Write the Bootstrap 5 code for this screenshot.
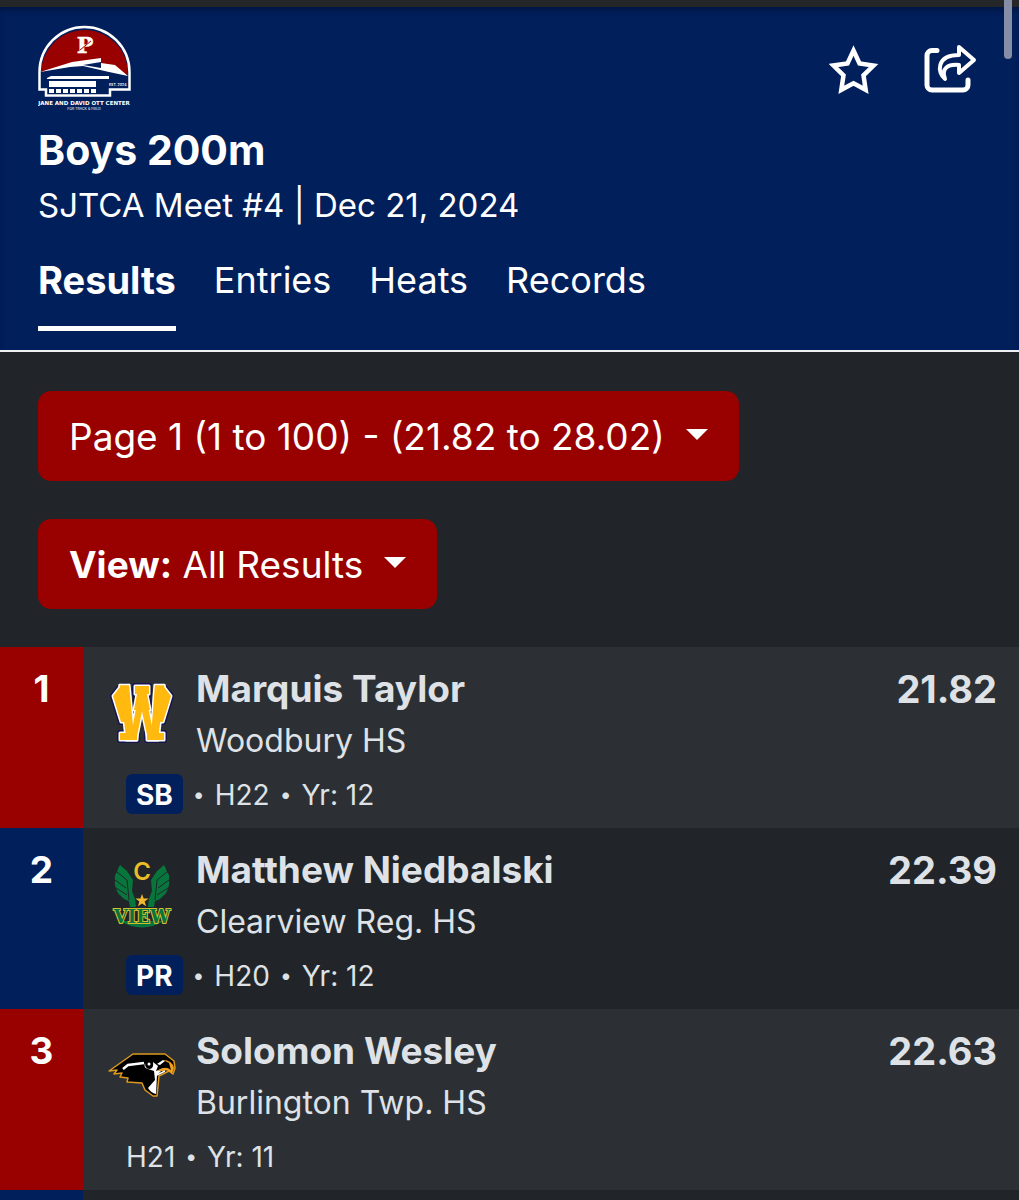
<!DOCTYPE html>
<html lang="en" data-bs-theme="dark">
<head>
<meta charset="utf-8">
<meta name="viewport" content="width=device-width, initial-scale=1">
<title>Boys 200m - SJTCA Meet #4</title>
<link href="https://cdn.jsdelivr.net/npm/bootstrap@5.3.0/dist/css/bootstrap.min.css" rel="stylesheet">
<style>
:root { --navy: #001f5b; --red: #990000; }
body { font-family: Inter, "Liberation Sans", sans-serif; background: #212529; color: #dee2e6; overflow-x: hidden; }
.top-strip { height: 7px; background: #252628; }
.meet-header { background: var(--navy); color: #fff; border-bottom: 2px solid #eef0f5; padding: 18px 38px 19px; box-shadow: inset 0 5px 6px -3px #00133c; }
.venue-logo { width: 94px; height: 87px; }
.icon-btn { background: none; border: 0; padding: 0; color: #fff; line-height: 0; }
.icon-row { gap: 45px; }
.event-title { font-size: 41px; line-height: 48px; font-weight: 700; margin: 14px 0 0; }
.event-sub { font-size: 33px; line-height: 40px; margin: 11px 0 0; }
.event-tabs { gap: 38px; margin-top: 33px; }
.event-tabs a { font-size: 36px; line-height: 44px; color: #fff; text-decoration: none; padding-bottom: 24px; border-bottom: 5px solid transparent; }
.event-tabs a.active { font-size: 38px; font-weight: 700; border-color: #fff; }
.filters { padding: 39px 38px 38px; gap: 38px; }
.filter-btn { --bs-btn-bg: var(--red); --bs-btn-hover-bg: #850000; --bs-btn-active-bg: #850000; --bs-btn-color: #fff; --bs-btn-hover-color: #fff; --bs-btn-border-width: 0; --bs-btn-border-radius: 13px; --bs-btn-font-size: 37px; --bs-btn-line-height: 46px; --bs-btn-padding-x: 31px; padding-top: 23px; padding-bottom: 21px; white-space: nowrap; }
.filter-btn::after { margin-left: 21px; border-top-width: 11px; border-left-width: 11px; border-right-width: 11px; vertical-align: 10px; }
.results td { padding: 20px 22px 0; border: 0; vertical-align: top; height: 181px; background: #212529; color: #dee2e6; box-shadow: none; }
.results tr:nth-child(odd) td { background: #2c3034; }
.results .rank { width: 83px; padding: 20px 0 0; text-align: center; background: var(--navy); color: #fff; }
.results tr:nth-child(odd) .rank { background: var(--red); }
.results .athlete { padding-left: 25px; padding-right: 0; }
.results .next-row td { height: 10px; padding: 0; }
.strong-line { font-size: 37px; line-height: 44px; font-weight: 700; }
.finish-time { font-size: 38px; line-height: 44px; font-weight: 700; text-align: right; }
.team-row { gap: 20px; }
.school { font-size: 32px; line-height: 40px; margin-top: 10px; }
.team-logo { width: 68px; height: 70px; margin-top: 11px; overflow: visible; }
.meta-line { font-size: 28px; margin-top: 13px; padding-left: 18px; gap: 10px; }
.meta-line span { line-height: 38px; padding-top: 2px; }
.meta-line .sep-dot { font-size: 21px; }
.meta-line .mark-tag { background: var(--navy); color: #fff; font-weight: 700; padding: 2px 10px 0; border-radius: 6px; }
.scroll-thumb { position: absolute; top: 0; right: 7px; width: 8px; height: 59px; border-radius: 0 0 4px 4px; background: #868da6; }
</style>
</head>
<body>
<div class="top-strip"></div>
<div class="scroll-thumb"></div>
<header class="meet-header">
  <div class="d-flex justify-content-between align-items-start">
    <svg class="venue-logo" viewBox="0 0 94 87" role="img" aria-label="Jane and David Ott Center">
      <path d="M3 47a43.500 43.500 0 0 1 87 3L64 40 34 38z" fill="#990000"/>
      <path d="M2 47L34 37 63 33v5l14 2 13 11-19-4-26-6-13 1z" fill="#fff"/>
      <path d="M45 40l18-3v6z" fill="#001f5b"/>
      <path d="M9 53l4-2h58v3H9zM11 56h47v6H11z" fill="#fff"/>
      <path d="M11 66h47" stroke="#fff" stroke-width="4" stroke-dasharray="5 2"/>
      <path d="M1.500 64.500V47a45 45 0 0 1 90 0v17.500H72v6H8v-6z" fill="none" stroke="#fff" stroke-width="2.500"/>
      <text x="47" y="28" text-anchor="middle" font-family="DejaVu Serif" font-weight="700" font-size="22" fill="#fff" stroke="#fff" stroke-width=".5">P</text>
      <path d="M42 25l11-9" stroke="#990000"/>
      <text x="71" y="61" font-size="3.500" fill="#fff" font-weight="600">EST. 2024</text>
      <text x="46" y="80" text-anchor="middle" font-family="DejaVu Sans" font-size="5.500" font-weight="700" fill="#fff">JANE AND DAVID OTT CENTER</text>
      <text x="46" y="85" text-anchor="middle" font-size="3.500" fill="#fff">FOR TRACK &amp; FIELD</text>
    </svg>
    <div class="d-flex icon-row">
      <button class="icon-btn" type="button" aria-label="Favorite"><svg width="50" height="87" viewBox="0 0 50 87"><path d="M24.500 25.500l6 13 14 2-10 9.800 2.200 14.500-12.200-6.500-12.200 6.500 2.200-14.500-10-9.800 14-2z" fill="none" stroke="#fff" stroke-width="4.500"/></svg></button>
      <button class="icon-btn" type="button" aria-label="Share"><svg width="57" height="87" viewBox="0 0 57 87" fill="none" stroke="#fff" stroke-width="5" stroke-linecap="round" stroke-linejoin="round"><path d="M13 25.500H8a5 5 0 0 0-5 5V60a5 5 0 0 0 5 5h31a5 5 0 0 0 5-5v-5"/><path d="M35 22l15 13-15 13v-8c-11-1-18 3-14 14-8-6-9-24 14-24z" stroke-width="4"/></svg></button>
    </div>
  </div>
  <h1 class="event-title">Boys 200m</h1>
  <p class="event-sub">SJTCA Meet #4 | Dec 21, 2024</p>
  <nav class="event-tabs d-flex">
    <a class="active" href="#results" aria-current="page">Results</a>
    <a href="#entries">Entries</a>
    <a href="#heats">Heats</a>
    <a href="#records">Records</a>
  </nav>
</header>
<main>
  <div class="filters d-flex flex-column align-items-start">
    <button class="btn filter-btn dropdown-toggle" type="button">Page 1 (1 to 100) - (21.82 to 28.02)</button>
    <button class="btn filter-btn dropdown-toggle" type="button"><b>View:</b> All Results</button>
  </div>
  <table class="table results mb-0" id="results">
    <tbody>
      <tr>
        <td class="rank strong-line">1</td>
        <td class="athlete">
          <div class="d-flex align-items-start team-row">
            <svg class="team-logo flex-shrink-0" viewBox="0 0 68 70" role="img" aria-label="Woodbury">
              <defs>
                <path id="slabs" d="M5 18l7-9 6-1v10h-3l6 26h-8zM63 18l-7-9-6-1v10h3l-6 26h8zM27 8h14v8h-2l3 16H26l3-16h-2zM12 55h17v7H12zM39 55h17v7H39z"/>
              </defs>
              <g stroke-linejoin="round" fill="#ffb90f" font-family="DejaVu Sans Mono" font-weight="700" font-size="74" text-anchor="middle">
                <g stroke="#15144f" stroke-width="6"><use href="#slabs"/></g>
                <g stroke="#fff" stroke-width="3"><use href="#slabs"/><text x="34" y="62">W</text></g>
                <use href="#slabs"/>
              </g>
              <text x="34" y="62" fill="#ffb90f" font-family="DejaVu Sans Mono" font-weight="700" font-size="74" text-anchor="middle">W</text>
            </svg>
            <div><div class="strong-line">Marquis Taylor</div><div class="school">Woodbury HS</div></div>
          </div>
          <div class="meta-line d-flex"><span class="mark-tag">SB</span><span class="sep-dot">•</span><span>H22</span><span class="sep-dot">•</span><span>Yr: 12</span></div>
        </td>
        <td class="finish-time">21.82</td>
      </tr>
      <tr>
        <td class="rank strong-line">2</td>
        <td class="athlete">
          <div class="d-flex align-items-start team-row">
            <svg class="team-logo flex-shrink-0" viewBox="0 0 68 70" role="img" aria-label="Clearview">
              <g fill="#08763c">
                <g id="wing"><path d="M12 6q-2 3-3 7-3 3-2 8-1 4 1 8 1 5 5 8 3 4 8 5l1 6h6l-1-8-3-8 1-11-6-9z"/><path d="M9 13l10 8 2 20M7 21l11 8M8 29l11 7" fill="none" stroke="#212529"/></g>
                <use href="#wing" transform="matrix(-1 0 0 1 68 0)"/>
              </g>
              <text x="34" y="21" text-anchor="middle" font-size="24" font-weight="600" fill="#e9bd28">C</text>
              <path d="M34 35l1.600 4.600h5l-4 3 1.500 4.600-4.100-2.800-4.100 2.800 1.500-4.600-4-3h5z" fill="#f1b92e"/>
              <path d="M12 62q22 13 44 0" fill="#08763c"/>
              <text x="34" y="64" text-anchor="middle" font-family="DejaVu Serif" font-weight="700" font-size="18" fill="#08763c" stroke="#d5bd30" stroke-width="2" paint-order="stroke">VIEW</text>
            </svg>
            <div><div class="strong-line">Matthew Niedbalski</div><div class="school">Clearview Reg. HS</div></div>
          </div>
          <div class="meta-line d-flex"><span class="mark-tag">PR</span><span class="sep-dot">•</span><span>H20</span><span class="sep-dot">•</span><span>Yr: 12</span></div>
        </td>
        <td class="finish-time">22.39</td>
      </tr>
      <tr>
        <td class="rank strong-line">3</td>
        <td class="athlete">
          <div class="d-flex align-items-start team-row">
            <svg class="team-logo flex-shrink-0" viewBox="0 0 68 70" role="img" aria-label="Burlington Township">
              <path d="M1 31L25 14h32l9 7 1 7-2 6-4-3-10 5-2 20h-4l-8-6-3-7-15-1 1-4-8-1 2-4-8 1 3-4z" fill="#000" stroke="#dc991d" stroke-width="1.500" stroke-linejoin="round"/>
              <path d="M15 29l5-4 16-2" fill="none" stroke="#fff" stroke-width="2.500"/>
              <path d="M37 23q0 6 5 6 4-1 3-7l5 4-2 5 8-3-7 7-1 19q-5-1-8-6l7-8-1-9-6-2q-5-1-3-6z" fill="#fff"/>
              <path d="M49 24l6-4 2 1-5 4z" fill="#fff"/><circle cx="41" cy="24" r="1.500" fill="#fff"/>
              <path d="M49 31q8-6 14-1l-2-7-6-3q9 0 11 8l-2 6q-4-5-9-3z" fill="#f0a020"/>
              <path d="M49 35l8-4" stroke="#fff" stroke-width="1.500"/>
            </svg>
            <div><div class="strong-line">Solomon Wesley</div><div class="school">Burlington Twp. HS</div></div>
          </div>
          <div class="meta-line d-flex"><span>H21</span><span class="sep-dot">•</span><span>Yr: 11</span></div>
        </td>
        <td class="finish-time">22.63</td>
      </tr>
      <tr class="next-row"><td class="rank"></td><td></td><td></td></tr>
    </tbody>
  </table>
</main>
<script src="https://cdn.jsdelivr.net/npm/bootstrap@5.3.0/dist/js/bootstrap.bundle.min.js"></script>
</body>
</html>
